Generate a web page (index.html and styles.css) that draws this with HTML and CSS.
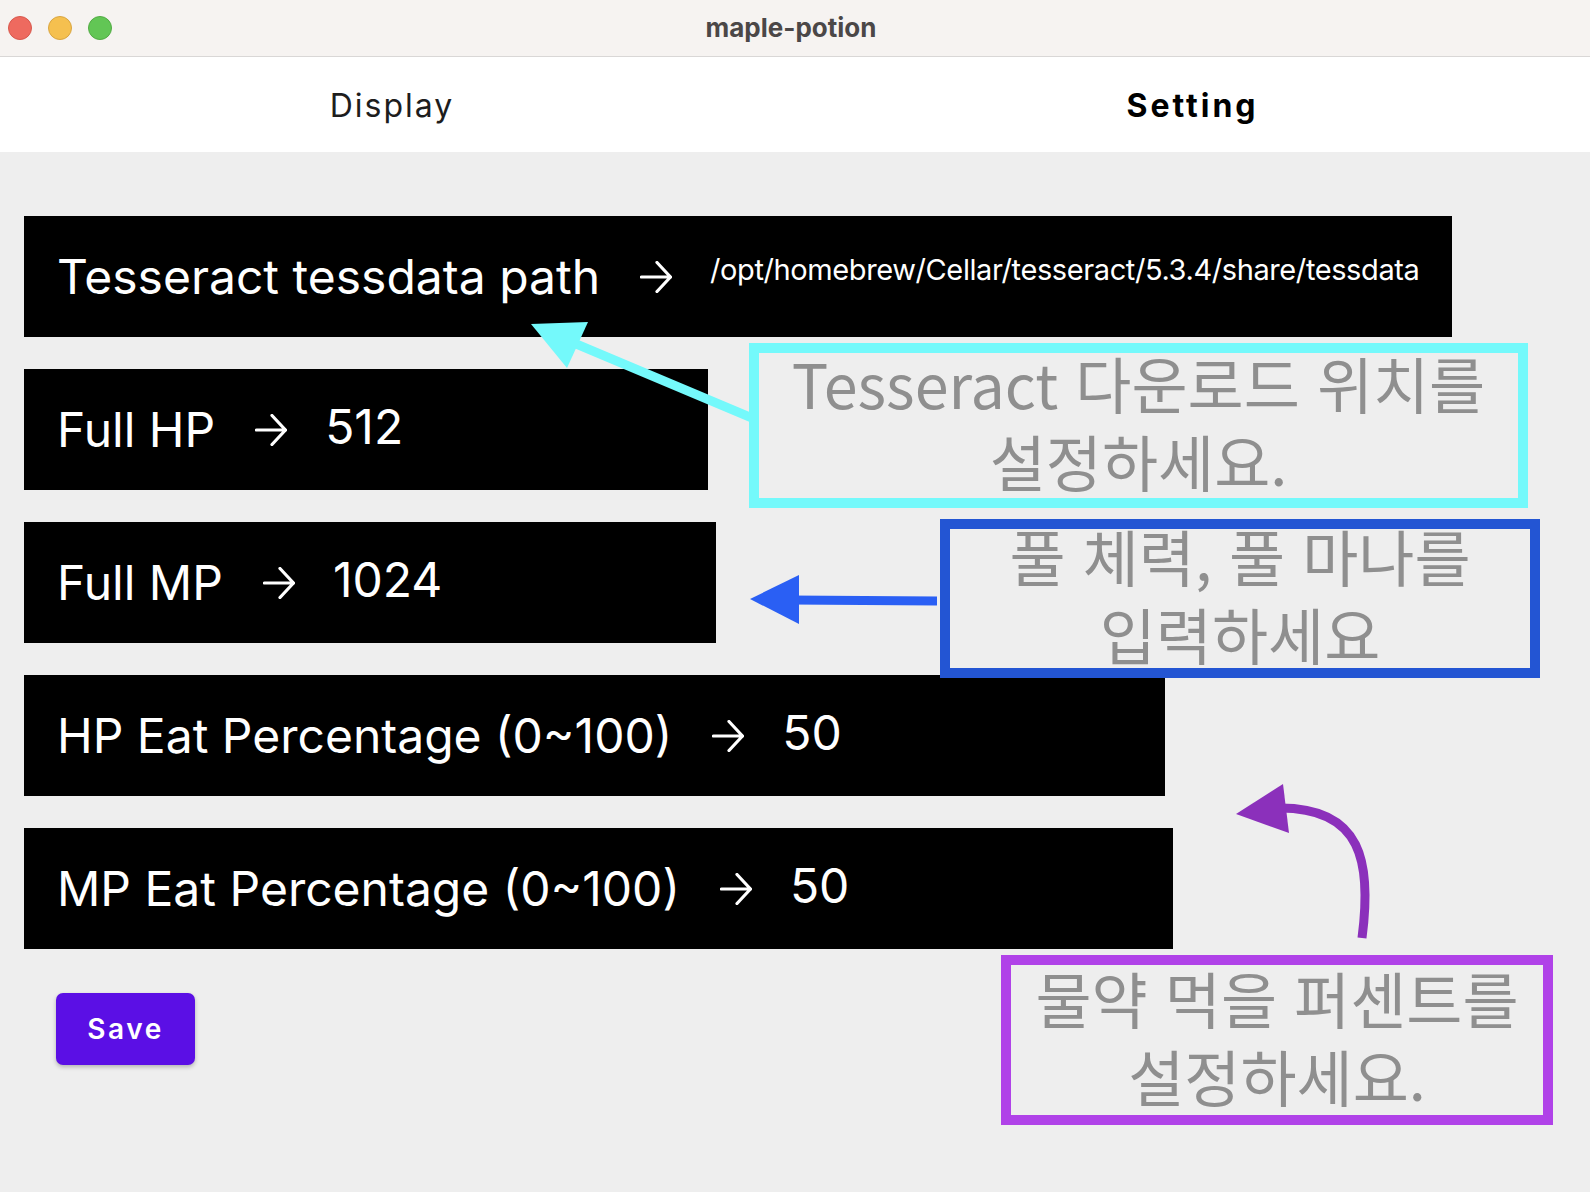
FILE: index.html
```html
<!DOCTYPE html>
<html lang="ko">
<head>
<meta charset="utf-8">
<title>maple-potion</title>
<link rel="stylesheet" href="styles.css">
</head>
<body>
<div class="window">
  <header class="titlebar">
    <div class="lights">
      <span class="light red"></span>
      <span class="light yellow"></span>
      <span class="light green"></span>
    </div>
    <div class="title">maple-potion</div>
  </header>
  <nav class="tabs">
    <div class="tab first">Display</div>
    <div class="tab active">Setting</div>
  </nav>
  <main class="content">
    <div class="row">
      <span class="label">Tesseract tessdata path</span>
      <svg class="arrow" viewBox="0 0 32 32"><path d="M1.5 16H30.5M17 1.5L30.5 16L17 30.5"/></svg>
      <span class="value small">/opt/homebrew/Cellar/tesseract/5.3.4/share/tessdata</span>
    </div>
    <div class="row">
      <span class="label">Full HP</span>
      <svg class="arrow" viewBox="0 0 32 32"><path d="M1.5 16H30.5M17 1.5L30.5 16L17 30.5"/></svg>
      <span class="value">512</span>
    </div>
    <div class="row">
      <span class="label">Full MP</span>
      <svg class="arrow" viewBox="0 0 32 32"><path d="M1.5 16H30.5M17 1.5L30.5 16L17 30.5"/></svg>
      <span class="value">1024</span>
    </div>
    <div class="row">
      <span class="label">HP Eat Percentage (0~100)</span>
      <svg class="arrow" viewBox="0 0 32 32"><path d="M1.5 16H30.5M17 1.5L30.5 16L17 30.5"/></svg>
      <span class="value">50</span>
    </div>
    <div class="row">
      <span class="label">MP Eat Percentage (0~100)</span>
      <svg class="arrow" viewBox="0 0 32 32"><path d="M1.5 16H30.5M17 1.5L30.5 16L17 30.5"/></svg>
      <span class="value">50</span>
    </div>
    <button class="save">Save</button>
  </main>

  <svg class="annot-arrows" viewBox="0 0 1590 1192" width="1590" height="1192">
    <line class="a-cyan" x1="752" y1="418" x2="562" y2="338"/>
    <polygon class="f-cyan" points="531,324 588,322 567,368"/>
    <line class="a-blue" x1="937" y1="601" x2="790" y2="600"/>
    <polygon class="f-blue" points="750,599 799,575 799,624"/>
    <path class="a-purple" d="M1362 938 C1372 862 1362 808 1280 808"/>
    <polygon class="f-purple" points="1236,814 1283,784 1289,833"/>
  </svg>

  <div class="note cyan">
    <p>Tesseract 다운로드 위치를</p>
    <p>설정하세요.</p>
  </div>
  <div class="note blue">
    <p>풀 체력, 풀 마나를</p>
    <p>입력하세요</p>
  </div>
  <div class="note purple">
    <p>물약 먹을 퍼센트를</p>
    <p>설정하세요.</p>
  </div>
</div>
</body>
</html>
```

FILE: styles.css
```css
* { box-sizing: border-box; }
html, body { margin: 0; padding: 0; }
body {
  width: 1590px;
  height: 1192px;
  overflow: hidden;
  background: #eeeeee;
  font-family: Inter, "Noto Sans", "Noto Sans CJK KR", sans-serif;
}
.window {
  position: relative;
  width: 1590px;
  height: 1192px;
  display: flex;
  flex-direction: column;
  background: #eeeeee;
}
.titlebar {
  height: 57px;
  flex: none;
  background: #f6f3f1;
  border-bottom: 1px solid #d9d7d6;
  display: flex;
  align-items: center;
  position: relative;
}
.lights {
  display: flex;
  gap: 16px;
  padding-left: 8px;
  margin-top: -1px;
}
.light {
  width: 24px;
  height: 24px;
  border-radius: 50%;
  display: block;
}
.red { background: #ee6a5f; border: 1px solid #d8584d; }
.yellow { background: #f5c04f; border: 1px solid #d9a541; }
.green { background: #62c655; border: 1px solid #52ab44; }
.title {
  position: absolute;
  left: 0;
  right: 0;
  top: 0;
  bottom: 0;
  display: flex;
  align-items: center;
  justify-content: center;
  font-weight: 700;
  font-size: 26px;
  color: #4b4747;
  margin-top: -2px;
  padding-right: 8px;
}
.tabs {
  height: 95px;
  flex: none;
  background: #ffffff;
  display: flex;
}
.tab {
  width: 50%;
  flex: none;
  display: flex;
  align-items: center;
  justify-content: center;
  font-size: 32px;
  letter-spacing: 2px;
  color: #1d1d1d;
  padding-top: 1px;
}
.tab.first {
  padding-right: 11px;
}
.tab.active {
  font-weight: 700;
  color: #000000;
  letter-spacing: 3px;
}
.content {
  flex: 1;
  padding: 64px 0 0 24px;
  display: flex;
  flex-direction: column;
  align-items: flex-start;
  gap: 32px;
}
.row {
  height: 121px;
  background: #000000;
  color: #ffffff;
  display: flex;
  align-items: center;
  padding: 0 33px 0 33px;
}
.label {
  font-size: 48px;
  letter-spacing: 0;
  white-space: nowrap;
}
.arrow {
  width: 32px;
  height: 32px;
  margin: 0 38px 0 40px;
  flex: none;
}
.arrow path {
  fill: none;
  stroke: #ffffff;
  stroke-width: 3.2;
  stroke-linecap: round;
  stroke-linejoin: round;
}
.value {
  min-width: 350px;
  font-size: 48px;
  margin-bottom: 7px;
  white-space: nowrap;
}
.value.small {
  font-size: 29px;
  letter-spacing: -0.4px;
  margin-bottom: 15px;
}
.save {
  margin: 12px 0 0 32px;
  width: 139px;
  height: 72px;
  border: none;
  border-radius: 7px;
  background: #5b0fe5;
  color: #ffffff;
  font-family: Inter, "Noto Sans", sans-serif;
  font-size: 28px;
  font-weight: 600;
  letter-spacing: 2.6px;
  box-shadow: 0 2px 4px rgba(0,0,0,0.25);
  padding: 0;
}

/* annotation overlay */
.annot-arrows {
  position: absolute;
  left: 0;
  top: 0;
  pointer-events: none;
}
.a-cyan { stroke: #74f9fb; stroke-width: 9; }
.f-cyan { fill: #74f9fb; }
.a-blue { stroke: #2a5ff4; stroke-width: 9; }
.f-blue { fill: #2a5ff4; }
.a-purple { stroke: #8b30bb; stroke-width: 9; fill: none; }
.f-purple { fill: #8b30bb; }

.note {
  position: absolute;
  display: flex;
  flex-direction: column;
  align-items: center;
  justify-content: center;
  font-family: "Noto Sans CJK KR", sans-serif;
  color: #8f8f8f;
  font-size: 61px;
  line-height: 78px;
  background: #eeeeee;
  padding-bottom: 7px;
}
.note p {
  margin: 0;
  white-space: nowrap;
}
.note.cyan {
  left: 749px;
  top: 343px;
  width: 779px;
  height: 165px;
  border: 10px solid #74f9fb;
}
.note.blue {
  left: 940px;
  top: 519px;
  width: 600px;
  height: 159px;
  border: 10px solid #2355d3;
}
.note.purple {
  left: 1001px;
  top: 955px;
  width: 552px;
  height: 170px;
  border: 10px solid #b042e8;
}
```
